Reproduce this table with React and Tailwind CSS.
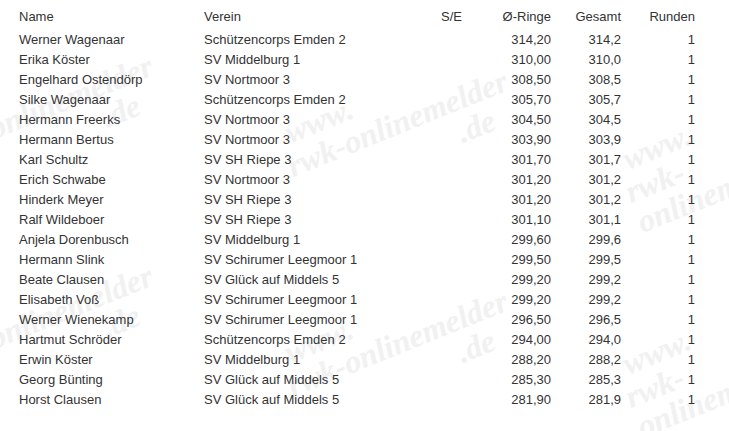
import React from "react";

const rows = [
  ["Werner Wagenaar", "Schützencorps Emden 2", "314,20", "314,2"],
  ["Erika Köster", "SV Middelburg 1", "310,00", "310,0"],
  ["Engelhard Ostendörp", "SV Nortmoor 3", "308,50", "308,5"],
  ["Silke Wagenaar", "Schützencorps Emden 2", "305,70", "305,7"],
  ["Hermann Freerks", "SV Nortmoor 3", "304,50", "304,5"],
  ["Hermann Bertus", "SV Nortmoor 3", "303,90", "303,9"],
  ["Karl Schultz", "SV SH Riepe 3", "301,70", "301,7"],
  ["Erich Schwabe", "SV Nortmoor 3", "301,20", "301,2"],
  ["Hinderk Meyer", "SV SH Riepe 3", "301,20", "301,2"],
  ["Ralf Wildeboer", "SV SH Riepe 3", "301,10", "301,1"],
  ["Anjela Dorenbusch", "SV Middelburg 1", "299,60", "299,6"],
  ["Hermann Slink", "SV Schirumer Leegmoor 1", "299,50", "299,5"],
  ["Beate Clausen", "SV Glück auf Middels 5", "299,20", "299,2"],
  ["Elisabeth Voß", "SV Schirumer Leegmoor 1", "299,20", "299,2"],
  ["Werner Wienekamp", "SV Schirumer Leegmoor 1", "296,50", "296,5"],
  ["Hartmut Schröder", "Schützencorps Emden 2", "294,00", "294,0"],
  ["Erwin Köster", "SV Middelburg 1", "288,20", "288,2"],
  ["Georg Bünting", "SV Glück auf Middels 5", "285,30", "285,3"],
  ["Horst Clausen", "SV Glück auf Middels 5", "281,90", "281,9"],
];

function Mark({ className }) {
  return (
    <div
      aria-hidden="true"
      className={
        "absolute flex flex-col items-start -rotate-[22deg] text-[#f1f1f1] font-bold italic leading-[32px] text-[32px] select-none pointer-events-none " +
        className
      }
      style={{ fontFamily: '"Liberation Serif", serif' }}
    >
      <span className="pl-[10px]">www.</span>
      <span>rwk-onlinemelder</span>
      <span className="pl-[170px]">.de</span>
    </div>
  );
}

export default function App() {
  return (
    <div
      className="relative w-[729px] h-[431px] bg-white overflow-hidden text-[13px] text-[#333333]"
      style={{ fontFamily: '"Liberation Sans", Arial, sans-serif' }}
    >
      <Mark className="left-[-75px] top-[60px]" />
      <Mark className="left-[280px] top-[75px]" />
      <Mark className="left-[625px] top-[105px]" />
      <Mark className="left-[-75px] top-[270px]" />
      <Mark className="left-[280px] top-[295px]" />
      <Mark className="left-[625px] top-[310px]" />

      <div className="relative pl-[19px] pt-[7px]">
        <div className="grid grid-cols-[185px_237px_50px_60px_70px_74px] h-[20px] items-center mb-[3px]">
          <div>Name</div>
          <div>Verein</div>
          <div>S/E</div>
          <div className="text-right">Ø-Ringe</div>
          <div className="text-right">Gesamt</div>
          <div className="text-right">Runden</div>
        </div>
        {rows.map((r, i) => (
          <div
            key={i}
            className="grid grid-cols-[185px_237px_50px_60px_70px_74px] h-[20px] items-center"
          >
            <div>{r[0]}</div>
            <div>{r[1]}</div>
            <div></div>
            <div className="text-right">{r[2]}</div>
            <div className="text-right">{r[3]}</div>
            <div className="text-right">1</div>
          </div>
        ))}
      </div>
    </div>
  );
}
